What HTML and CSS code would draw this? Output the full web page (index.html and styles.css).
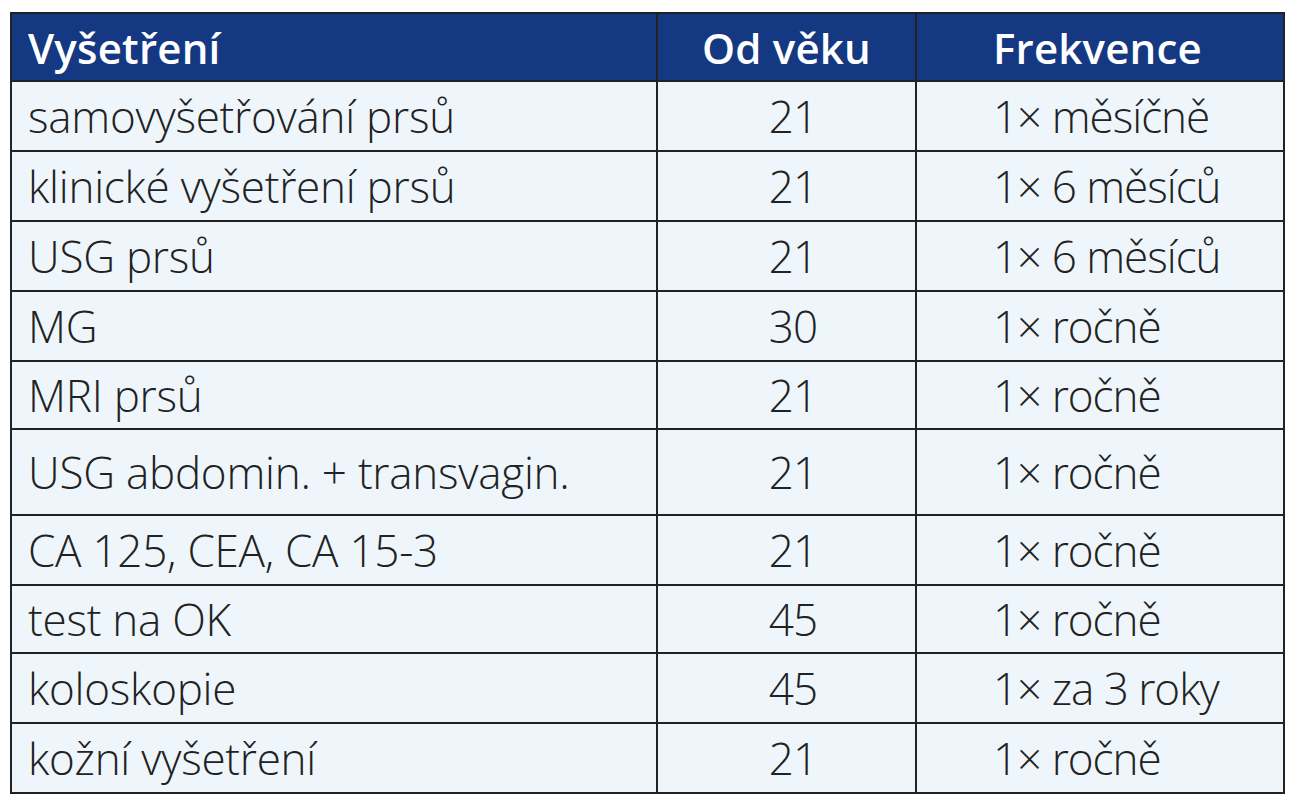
FILE: index.html
```html
<!DOCTYPE html>
<html lang="cs">
<head>
<meta charset="utf-8">
<title>Vyšetření</title>
<link rel="stylesheet" href="styles.css">
</head>
<body>
<table class="data">
  <colgroup>
    <col class="c-name">
    <col class="c-age">
    <col class="c-freq">
  </colgroup>
  <thead>
    <tr class="head">
      <th class="name">Vyšetření</th>
      <th class="age">Od věku</th>
      <th class="freq">Frekvence</th>
    </tr>
  </thead>
  <tbody>
    <tr><td class="name">samovyšetřování prsů</td><td class="age">21</td><td class="freq">1× měsíčně</td></tr>
    <tr><td class="name">klinické vyšetření prsů</td><td class="age">21</td><td class="freq">1× 6 měsíců</td></tr>
    <tr><td class="name">USG prsů</td><td class="age">21</td><td class="freq">1× 6 měsíců</td></tr>
    <tr><td class="name">MG</td><td class="age">30</td><td class="freq">1× ročně</td></tr>
    <tr class="short"><td class="name">MRI prsů</td><td class="age">21</td><td class="freq">1× ročně</td></tr>
    <tr class="tall"><td class="name">USG abdomin. + transvagin.</td><td class="age">21</td><td class="freq">1× ročně</td></tr>
    <tr><td class="name">CA 125, CEA, CA 15-3</td><td class="age">21</td><td class="freq">1× ročně</td></tr>
    <tr class="short"><td class="name">test na OK</td><td class="age">45</td><td class="freq">1× ročně</td></tr>
    <tr><td class="name">koloskopie</td><td class="age">45</td><td class="freq">1× za 3 roky</td></tr>
    <tr><td class="name">kožní vyšetření</td><td class="age">21</td><td class="freq">1× ročně</td></tr>
  </tbody>
</table>
</body>
</html>
```
FILE: styles.css
```css
html, body {
  margin: 0;
  padding: 0;
  background: #ffffff;
}

body {
  font-family: "Open Sans", "Noto Sans", "DejaVu Sans", sans-serif;
  color: #222222;
}

.data {
  border-collapse: collapse;
  table-layout: fixed;
  width: 1273px;
  margin: 12px 0 0 10px;
  background: #eef6fc;
}

.c-name { width: 646px; }
.c-age { width: 259px; }
.c-freq { width: 368px; }

.data th,
.data td {
  border: 2px solid #222222;
  padding: 0;
  vertical-align: middle;
  white-space: nowrap;
  overflow: hidden;
}

.data td {
  font-size: 44px;
  font-weight: 300;
  font-stretch: 100%;
  letter-spacing: -0.25px;
}

.head {
  height: 68px;
  background: #153883;
}

.data th {
  color: #ffffff;
  font-size: 42px;
  font-weight: 600;
  font-stretch: 100%;
  letter-spacing: 0.2px;
}

tbody tr { height: 70px; }
tbody tr.short { height: 68px; }
tbody tr.tall { height: 86px; }

.data .name {
  text-align: left;
  padding-left: 16px;
}

.data th.age { text-align: center; }
.data td.age {
  text-align: right;
  padding-right: 98px;
  letter-spacing: -1px;
}

.data .freq {
  text-align: left;
  padding-left: 76px;
}

.data td.freq {
  letter-spacing: -1px;
}
```
